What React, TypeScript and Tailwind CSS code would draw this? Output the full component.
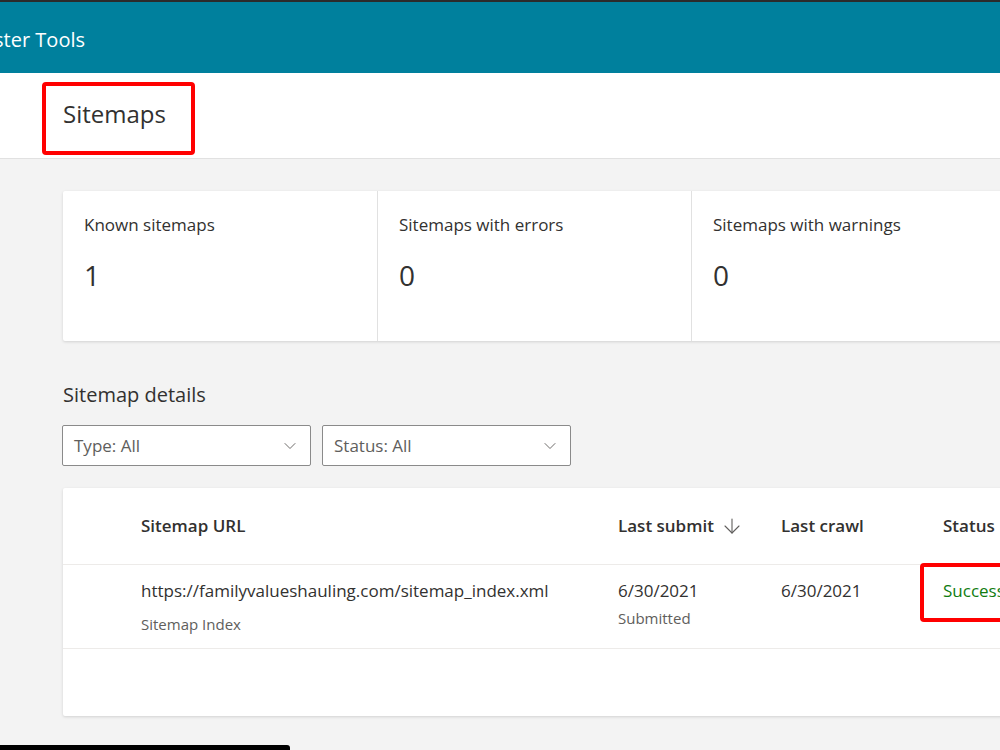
import { ChevronDown, ArrowDown } from 'lucide-react';

const font = { fontFamily: '"Open Sans", "Noto Sans", sans-serif' };

const stats = [
  { label: 'Known sitemaps', value: '1' },
  { label: 'Sitemaps with errors', value: '0' },
  { label: 'Sitemaps with warnings', value: '0' },
];

const Filter = ({ label }: { label: string }) => (
  <div className="w-[249px] h-[41px] bg-white border border-[#8a8a8a] rounded-[2px] flex items-center justify-between pl-[11px] pr-[10px]">
    <span className="text-[17px] text-[#605e5c]">{label}</span>
    <ChevronDown size={20} strokeWidth={1.1} className="text-[#605e5c]" />
  </div>
);

const App = () => {
  return (
    <div className="w-[1000px] h-[750px] overflow-hidden bg-[#f3f3f3] relative" style={font}>
      {/* top bar */}
      <div className="h-[2px] bg-[#2b2b2b]" />
      <div className="h-[71px] bg-[#00809d] flex items-center pt-[4px]">
        <div className="w-[85px] overflow-hidden flex justify-end">
          <span className="text-white text-[20px] whitespace-nowrap">Bing Webmaster Tools</span>
        </div>
      </div>

      {/* page title */}
      <div className="h-[86px] bg-white border-b border-[#e1e1e1] flex items-center pl-[63px] pb-[4px] relative">
        <h1 className="text-[24px] text-[#323130] leading-none">Sitemaps</h1>
        <div className="absolute left-[42px] top-[9px] w-[153px] h-[73px] border-[4px] border-[#f00] rounded-[4px]" />
      </div>

      <div className="pl-[63px] pt-[32px]">
        {/* summary cards */}
        <div className="w-[950px] h-[150px] bg-white shadow-[0_1px_3px_rgba(0,0,0,0.14)] rounded-[2px] flex">
          {stats.map((s, i) => (
            <div key={s.label} className={`w-[314px] pl-[21px] pt-[22px] ${i > 0 ? 'border-l border-[#e1e1e1]' : ''}`}>
              <div className="text-[17px] text-[#323130] leading-[24px]">{s.label}</div>
              <div className="text-[28px] text-[#323130] leading-[36px] mt-[20px]">{s.value}</div>
            </div>
          ))}
        </div>

        <h2 className="text-[20px] text-[#323130] leading-[28px] mt-[40px]">Sitemap details</h2>

        <div className="flex gap-[11px] mt-[16px] -ml-px">
          <Filter label="Type: All" />
          <Filter label="Status: All" />
        </div>

        {/* sitemap table */}
        <div className="w-[950px] h-[228px] mt-[22px] bg-white shadow-[0_1px_3px_rgba(0,0,0,0.14)] rounded-[2px] relative">
          <div className="h-[77px] border-b border-[#edebe9] flex items-center text-[17px] font-semibold text-[#323130]">
            <div className="w-[555px] pl-[78px]">Sitemap URL</div>
            <div className="w-[163px] flex items-center gap-[6px]">
              Last submit
              <ArrowDown size={24} strokeWidth={1.1} className="text-[#605e5c]" />
            </div>
            <div className="w-[162px]">Last crawl</div>
            <div>Status</div>
          </div>
          <div className="h-[84px] border-b border-[#edebe9] flex items-start pt-[14px] text-[17px] text-[#323130]">
            <div className="w-[555px] pl-[78px]">
              <div className="leading-[24px]">https://familyvalueshauling.com/sitemap_index.xml</div>
              <div className="text-[15px] text-[#605e5c] leading-[20px] mt-[11px]">Sitemap Index</div>
            </div>
            <div className="w-[163px]">
              <div className="leading-[24px]">6/30/2021</div>
              <div className="text-[15px] text-[#605e5c] leading-[20px] mt-[5px]">Submitted</div>
            </div>
            <div className="w-[162px] leading-[24px]">6/30/2021</div>
            <div className="leading-[24px] text-[#107c10]">Success</div>
          </div>
          <div className="absolute left-[857px] top-[75px] w-[100px] h-[59px] border-[4px] border-[#f00] rounded-[4px]" />
        </div>
      </div>

      {/* black strip at bottom */}
      <div className="absolute left-0 bottom-0 w-[290px] h-[5px] bg-black rounded-tr-[3px]" />
    </div>
  );
};

export default App;
